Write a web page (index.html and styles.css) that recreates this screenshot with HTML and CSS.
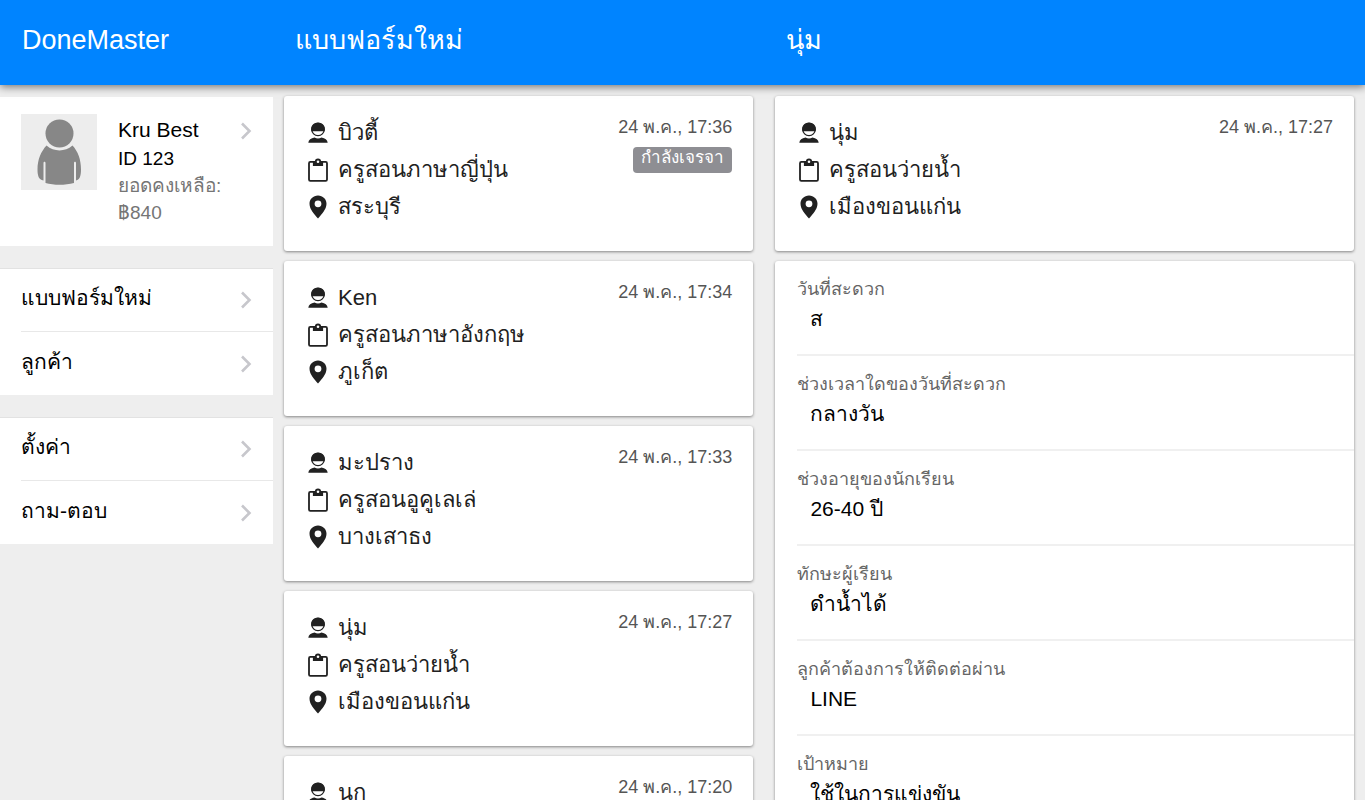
FILE: index.html
```html
<!DOCTYPE html>
<html lang="th">
<head>
<meta charset="UTF-8">
<meta name="viewport" content="width=device-width, initial-scale=1.0">
<title>DoneMaster</title>
<link rel="stylesheet" href="styles.css">
</head>
<body>

<!-- Shared icons -->
<svg class="sprite" aria-hidden="true">
  <symbol id="icon-person" viewBox="0 0 20 24">
    <circle cx="10" cy="8.500" r="6.200" fill="#fff" stroke="#212121" stroke-width="1.300"/>
    <path d="M3.400 10.200C2.200 5.200 5.300 1.600 10 1.600s7.800 3.600 6.600 8.600z" fill="#212121"/>
    <path d="M.3 21.800c.3-2.800 2.500-4.600 6.300-5.200 1.900 1.300 4.900 1.300 6.800 0 3.800.6 6 2.400 6.300 5.200z" fill="#212121"/>
  </symbol>
  <symbol id="icon-clipboard" viewBox="0 0 20 24">
    <rect x="1" y="3.900" width="18" height="18.900" rx="1.300" fill="#fff" stroke="#212121" stroke-width="1.800"/>
    <path d="M4.900 3.500h2a3.100 3.100 0 0 1 6.200 0h2v4.600H4.900z" fill="#212121"/>
    <circle cx="10" cy="3.800" r="1.300" fill="#fff"/>
  </symbol>
  <symbol id="icon-pin" viewBox="0 0 20 24">
    <path fill="#212121" fill-rule="evenodd" d="M10 .5c-4.800 0-8.500 3.600-8.500 8.300C1.500 14.500 6.500 19.500 10 23.500c3.500-4 8.500-9 8.500-14.700C18.500 4.100 14.800.5 10 .5zm0 4.900a3.400 3.400 0 1 1 0 6.800 3.400 3.400 0 0 1 0-6.800z"/>
  </symbol>
  <symbol id="icon-chevron" viewBox="0 0 12 18">
    <path d="M2 1.500L9.500 9 2 16.500" fill="none" stroke="#c7c7cc" stroke-width="2.600"/>
  </symbol>
</svg>

<header class="navbar">
  <h1>DoneMaster</h1>
  <h2>แบบฟอร์มใหม่</h2>
  <h2>นุ่ม</h2>
</header>

<div class="columns">

  <!-- Sidebar -->
  <aside class="sidebar">
    <a class="profile" href="#profile">
      <svg class="avatar" viewBox="0 0 76 76" aria-hidden="true">
        <rect width="76" height="76" fill="#ededed"/>
        <g fill="#878787">
          <circle cx="38.500" cy="19.500" r="14"/>
          <path d="M25.500 31.500c7.500 6.500 18.500 6.500 26 0 5.500 6 8.500 14 8.500 24 0 6-1 10-5 11V49c0-1.600-2-1.600-2 0v20c-9 2.400-20 2.400-28.500 0V49c0-1.600-2-1.600-2 0v17.500c-5-1-6-5-6-11 0-10 3.500-18 9-24z"/>
        </g>
      </svg>
      <div class="profile-text">
        <strong>Kru Best</strong>
        <span>ID 123</span>
        <span class="balance">ยอดคงเหลือ:<br>฿840</span>
      </div>
      <svg class="chevron"><use href="#icon-chevron"/></svg>
    </a>

    <nav class="menu">
      <a href="#forms"><span>แบบฟอร์มใหม่</span><svg class="chevron"><use href="#icon-chevron"/></svg></a>
      <a href="#customers"><span>ลูกค้า</span><svg class="chevron"><use href="#icon-chevron"/></svg></a>
    </nav>

    <nav class="menu">
      <a href="#settings"><span>ตั้งค่า</span><svg class="chevron"><use href="#icon-chevron"/></svg></a>
      <a href="#faq"><span>ถาม-ตอบ</span><svg class="chevron"><use href="#icon-chevron"/></svg></a>
    </nav>
  </aside>

  <!-- New forms -->
  <main class="list">
    <article class="card request">
      <ul>
        <li><svg class="icon"><use href="#icon-person"/></svg>บิวตี้</li>
        <li><svg class="icon"><use href="#icon-clipboard"/></svg>ครูสอนภาษาญี่ปุ่น</li>
        <li><svg class="icon"><use href="#icon-pin"/></svg>สระบุรี</li>
      </ul>
      <div class="meta">
        <time>24 พ.ค., 17:36</time>
        <span class="badge">กำลังเจรจา</span>
      </div>
    </article>

    <article class="card request">
      <ul>
        <li><svg class="icon"><use href="#icon-person"/></svg>Ken</li>
        <li><svg class="icon"><use href="#icon-clipboard"/></svg>ครูสอนภาษาอังกฤษ</li>
        <li><svg class="icon"><use href="#icon-pin"/></svg>ภูเก็ต</li>
      </ul>
      <div class="meta"><time>24 พ.ค., 17:34</time></div>
    </article>

    <article class="card request">
      <ul>
        <li><svg class="icon"><use href="#icon-person"/></svg>มะปราง</li>
        <li><svg class="icon"><use href="#icon-clipboard"/></svg>ครูสอนอูคูเลเล่</li>
        <li><svg class="icon"><use href="#icon-pin"/></svg>บางเสาธง</li>
      </ul>
      <div class="meta"><time>24 พ.ค., 17:33</time></div>
    </article>

    <article class="card request">
      <ul>
        <li><svg class="icon"><use href="#icon-person"/></svg>นุ่ม</li>
        <li><svg class="icon"><use href="#icon-clipboard"/></svg>ครูสอนว่ายน้ำ</li>
        <li><svg class="icon"><use href="#icon-pin"/></svg>เมืองขอนแก่น</li>
      </ul>
      <div class="meta"><time>24 พ.ค., 17:27</time></div>
    </article>

    <article class="card request">
      <ul>
        <li><svg class="icon"><use href="#icon-person"/></svg>นก</li>
      </ul>
      <div class="meta"><time>24 พ.ค., 17:20</time></div>
    </article>
  </main>

  <!-- Selected form -->
  <section class="detail">
    <article class="card request">
      <ul>
        <li><svg class="icon"><use href="#icon-person"/></svg>นุ่ม</li>
        <li><svg class="icon"><use href="#icon-clipboard"/></svg>ครูสอนว่ายน้ำ</li>
        <li><svg class="icon"><use href="#icon-pin"/></svg>เมืองขอนแก่น</li>
      </ul>
      <div class="meta"><time>24 พ.ค., 17:27</time></div>
    </article>

    <dl class="card answers">
      <div>
        <dt>วันที่สะดวก</dt>
        <dd>ส</dd>
      </div>
      <div>
        <dt>ช่วงเวลาใดของวันที่สะดวก</dt>
        <dd>กลางวัน</dd>
      </div>
      <div>
        <dt>ช่วงอายุของนักเรียน</dt>
        <dd>26-40 ปี</dd>
      </div>
      <div>
        <dt>ทักษะผู้เรียน</dt>
        <dd>ดำน้ำได้</dd>
      </div>
      <div>
        <dt>ลูกค้าต้องการให้ติดต่อผ่าน</dt>
        <dd>LINE</dd>
      </div>
      <div>
        <dt>เป้าหมาย</dt>
        <dd>ใช้ในการแข่งขัน</dd>
      </div>
    </dl>
  </section>

</div>

</body>
</html>
```
FILE: styles.css
```css
* {
  box-sizing: border-box;
}
body {
  margin: 0;
  height: 100vh;
  display: flex;
  flex-direction: column;
  overflow: hidden;
  background: #eee;
  color: #000;
  font-family: "Liberation Sans", Arial, sans-serif;
  font-size: 21px;
}
a {
  color: inherit;
  text-decoration: none;
}
.sprite {
  display: none;
}

/* Top bar, same tracks as the columns below */
.navbar,
.columns {
  display: grid;
  grid-template-columns: 20fr 36fr 44fr;
}
.navbar {
  z-index: 1;
  height: 85px;
  flex: none;
  background: #0084ff;
  color: #fff;
  box-shadow: 0 2px 8px rgba(0, 0, 0, 0.5);
}
.navbar h1,
.navbar h2 {
  margin: 0;
  padding-left: 22px;
  font-size: 27px;
  font-weight: normal;
  line-height: 80px;
}
.columns {
  flex: 1;
  min-height: 0;
}
.columns > * {
  min-width: 0;
  overflow: hidden;
}

/* Sidebar */
.sidebar {
  padding-top: 12px;
}
.profile {
  display: flex;
  align-items: flex-start;
  height: 149px;
  padding: 17px 21px 0;
  background: #fff;
}
.avatar {
  width: 76px;
  height: 76px;
  flex: none;
}
.profile-text {
  flex: 1;
  margin-left: 21px;
  font-size: 19px;
  line-height: 27px;
  white-space: nowrap;
}
.profile-text strong {
  display: block;
  font-size: 21px;
  font-weight: normal;
  line-height: 31px;
}
.profile-text span {
  display: block;
}
.profile-text .balance {
  color: #757575;
}
.chevron {
  width: 12px;
  height: 18px;
  flex: none;
}
.profile .chevron {
  margin-top: 8px;
}
.menu {
  margin-top: 22px;
  padding-left: 21px;
  background: #fff;
  border-top: 1px solid #e2e2e2;
}
.menu a {
  display: flex;
  align-items: center;
  justify-content: space-between;
  height: 63px;
  padding-right: 21px;
}
.menu a:first-child {
  border-bottom: 1px solid #e8e8e8;
}
.menu span {
  padding-bottom: 5px;
}

/* Cards */
.list,
.detail {
  padding: 11px 11px 0;
}
.card {
  margin: 0 0 10px;
  background: #fff;
  border-radius: 3px;
  box-shadow: 0 1px 3px rgba(0, 0, 0, 0.45);
}
.request {
  display: flex;
  justify-content: space-between;
  height: 155px;
  padding: 18px 21px 0 24px;
}
.request ul {
  margin: 0;
  padding: 0;
  list-style: none;
}
.request li {
  display: flex;
  height: 37px;
  line-height: 37px;
  gap: 10px;
  align-items: center;
  color: #212121;
  font-size: 22px;
}
.icon {
  width: 20px;
  height: 24px;
}
.meta {
  display: flex;
  flex-direction: column;
  align-items: flex-end;
  gap: 6px;
}
.meta time {
  color: #555;
  font-size: 18px;
  line-height: 27px;
}
.badge {
  height: 26px;
  padding: 0 8px;
  border-radius: 4px;
  background: #8e8e93;
  color: #fff;
  font-size: 17px;
  line-height: 22px;
}

/* Answers of the selected form */
.answers {
  padding-left: 22px;
}
.answers > div {
  height: 95px;
  padding-top: 13px;
  border-bottom: 2px solid #f0f0f0;
}
.answers dt {
  color: #666;
  font-size: 18px;
  line-height: 30px;
}
.answers dd {
  margin: 0 0 0 13px;
  line-height: 30px;
}
```
